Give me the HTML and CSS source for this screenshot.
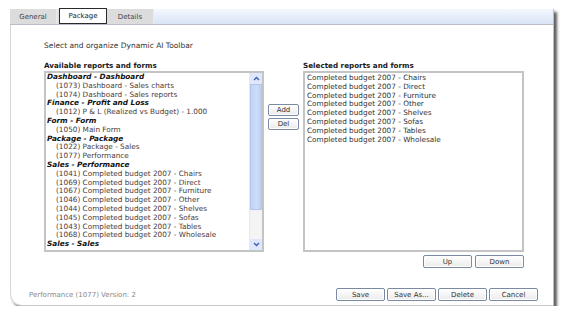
FILE: index.html
```html
<!DOCTYPE html>
<html>
<head>
<meta charset="utf-8">
<link rel="stylesheet" href="styles.css">
</head>
<body>
<div class="panel">
  <div class="tabbar">
    <div class="tab">General</div>
    <div class="tab active">Package</div>
    <div class="tab">Details</div>
    <div class="tabfill"></div>
  </div>
  <div class="content">
    <div class="intro">Select and organize Dynamic AI Toolbar</div>
    <div class="lists">
      <div class="col">
        <div class="label">Available reports and forms</div>
        <div class="listbox left">
          <div class="items">
            <div class="grp">Dashboard - Dashboard</div>
            <div class="it">(1073) Dashboard - Sales charts</div>
            <div class="it">(1074) Dashboard - Sales reports</div>
            <div class="grp">Finance - Profit and Loss</div>
            <div class="it">(1012) P &amp; L (Realized vs Budget) - 1.000</div>
            <div class="grp">Form - Form</div>
            <div class="it">(1050) Main Form</div>
            <div class="grp">Package - Package</div>
            <div class="it">(1022) Package - Sales</div>
            <div class="it">(1077) Performance</div>
            <div class="grp">Sales - Performance</div>
            <div class="it">(1041) Completed budget 2007 - Chairs</div>
            <div class="it">(1069) Completed budget 2007 - Direct</div>
            <div class="it">(1067) Completed budget 2007 - Furniture</div>
            <div class="it">(1046) Completed budget 2007 - Other</div>
            <div class="it">(1044) Completed budget 2007 - Shelves</div>
            <div class="it">(1045) Completed budget 2007 - Sofas</div>
            <div class="it">(1043) Completed budget 2007 - Tables</div>
            <div class="it">(1068) Completed budget 2007 - Wholesale</div>
            <div class="grp">Sales - Sales</div>
          </div>
          <div class="scroll">
            <div class="arrow">
              <svg width="7" height="5" viewBox="0 0 7 5"><path d="M1 4 L3.5 1.5 L6 4" fill="none" stroke="#3a5fb0" stroke-width="1.4"/></svg>
            </div>
            <div class="thumb"></div>
            <div class="track"></div>
            <div class="arrow">
              <svg width="7" height="5" viewBox="0 0 7 5"><path d="M1 1 L3.5 3.5 L6 1" fill="none" stroke="#3a5fb0" stroke-width="1.4"/></svg>
            </div>
          </div>
        </div>
      </div>
      <div class="mid">
        <button class="btn small">Add</button>
        <button class="btn small">Del</button>
      </div>
      <div class="col">
        <div class="label">Selected reports and forms</div>
        <div class="listbox right">
          <div class="items sel">
            <div>Completed budget 2007 - Chairs</div>
            <div>Completed budget 2007 - Direct</div>
            <div>Completed budget 2007 - Furniture</div>
            <div>Completed budget 2007 - Other</div>
            <div>Completed budget 2007 - Shelves</div>
            <div>Completed budget 2007 - Sofas</div>
            <div>Completed budget 2007 - Tables</div>
            <div>Completed budget 2007 - Wholesale</div>
          </div>
        </div>
        <div class="updown">
          <button class="btn wide">Up</button>
          <button class="btn wide">Down</button>
        </div>
      </div>
    </div>
    <div class="footer">
      <div class="version">Performance (1077) Version: 2</div>
      <div class="actions">
        <button class="btn wide">Save</button>
        <button class="btn wide">Save As...</button>
        <button class="btn wide">Delete</button>
        <button class="btn wide">Cancel</button>
      </div>
    </div>
  </div>
</div>
</body>
</html>
```
FILE: styles.css
```css
html, body {
  margin: 0;
  padding: 0;
  background: #ffffff;
}
body {
  font-family: "DejaVu Sans", Verdana, sans-serif;
  font-size: 7.3px;
  color: #333;
}
.panel {
  margin: 9px 0 0 10px;
  width: 543px;
  height: 296px;
  display: flex;
  flex-direction: column;
  background: #fff;
  border-right: 1px solid #bfbfbf;
  border-bottom: 1px solid #c8c8c8;
  border-bottom-left-radius: 12px;
  box-shadow: 3px 3px 3px #5e5e5e;
}
.tabbar {
  display: flex;
  height: 15px;
  border-bottom: 1px solid #b8bcc4;
  background: #e0e0e0;
}
.tab {
  width: 46px;
  display: flex;
  align-items: center;
  justify-content: center;
  background: #dcdcdc;
  color: #444;
  font-size: 7px;
  border-right: 1px solid #eaeaea;
}
.tab.active {
  background: #fff;
  border: 1px solid #2a2a2a;
  color: #222;
  margin-left: 2px;
  margin-top: -1px;
}
.tabfill {
  flex: 1;
  background: linear-gradient(#f4f8fe, #d8e4f6);
}
.content {
  flex: 1;
  display: flex;
  flex-direction: column;
  border-left: 1px solid #d6d6d6;
  border-bottom-left-radius: 12px;
  padding: 0 0 0 33px;
}
.intro {
  margin-top: 16px;
  font-size: 7.5px;
  color: #333;
  height: 10px;
}
.lists {
  display: flex;
  margin-top: 9px;
}
.col {
  display: flex;
  flex-direction: column;
}
.label {
  font-weight: bold;
  font-size: 7.2px;
  color: #1a1a1a;
  height: 9px;
  line-height: 9px;
  margin-bottom: 1px;
  margin-top: 1px;
}
.listbox {
  border: 2px solid #c4c4c4;
  background: #fff;
  display: flex;
  height: 177px;
}
.listbox.left {
  width: 216px;
}
.listbox.right {
  width: 217px;
}
.items {
  flex: 1;
  padding: 0 0 0 1px;
  line-height: 8.8px;
  white-space: nowrap;
  overflow: hidden;
}
.grp {
  font-weight: bold;
  font-style: italic;
  color: #111;
}
.it {
  padding-left: 9px;
  color: #4a3a3a;
}
.sel {
  padding: 1px 0 0 2px;
  color: #333;
}
.scroll {
  width: 12px;
  display: flex;
  flex-direction: column;
  background: #f2f4f8;
  border-left: 1px solid #e4e8f0;
}
.arrow {
  height: 11px;
  display: flex;
  align-items: center;
  justify-content: center;
  background: #dfe8fa;
}
.thumb {
  height: 124px;
  background: linear-gradient(90deg, #c2d3f5, #cddcfa 60%, #bccef2);
  border: 1px solid #b4c6ee;
}
.track {
  flex: 1;
  background: #f4f4f4;
}
.mid {
  display: flex;
  flex-direction: column;
  gap: 2px;
  margin: 44px 4px 0 4px;
}
.btn {
  font-family: "DejaVu Sans", Verdana, sans-serif;
  font-size: 7px;
  color: #333;
  background: linear-gradient(#ffffff, #ebebeb);
  border: 1px solid #7a8aa0;
  border-radius: 2px;
  padding: 0;
  height: 12px;
  line-height: 10px;
  box-shadow: inset 0 0 0 1px #fff;
}
.btn.small {
  width: 31px;
}
.btn.wide {
  width: 49px;
  height: 13px;
}
.updown {
  display: flex;
  justify-content: flex-end;
  gap: 3px;
  margin-top: 3px;
}
.footer {
  margin-top: auto;
  display: flex;
  align-items: center;
  justify-content: space-between;
  margin-left: -15px;
  padding: 0 15px 4px 0;
}
.version {
  color: #888;
  font-size: 7px;
}
.actions {
  display: flex;
  gap: 2px;
}
```
